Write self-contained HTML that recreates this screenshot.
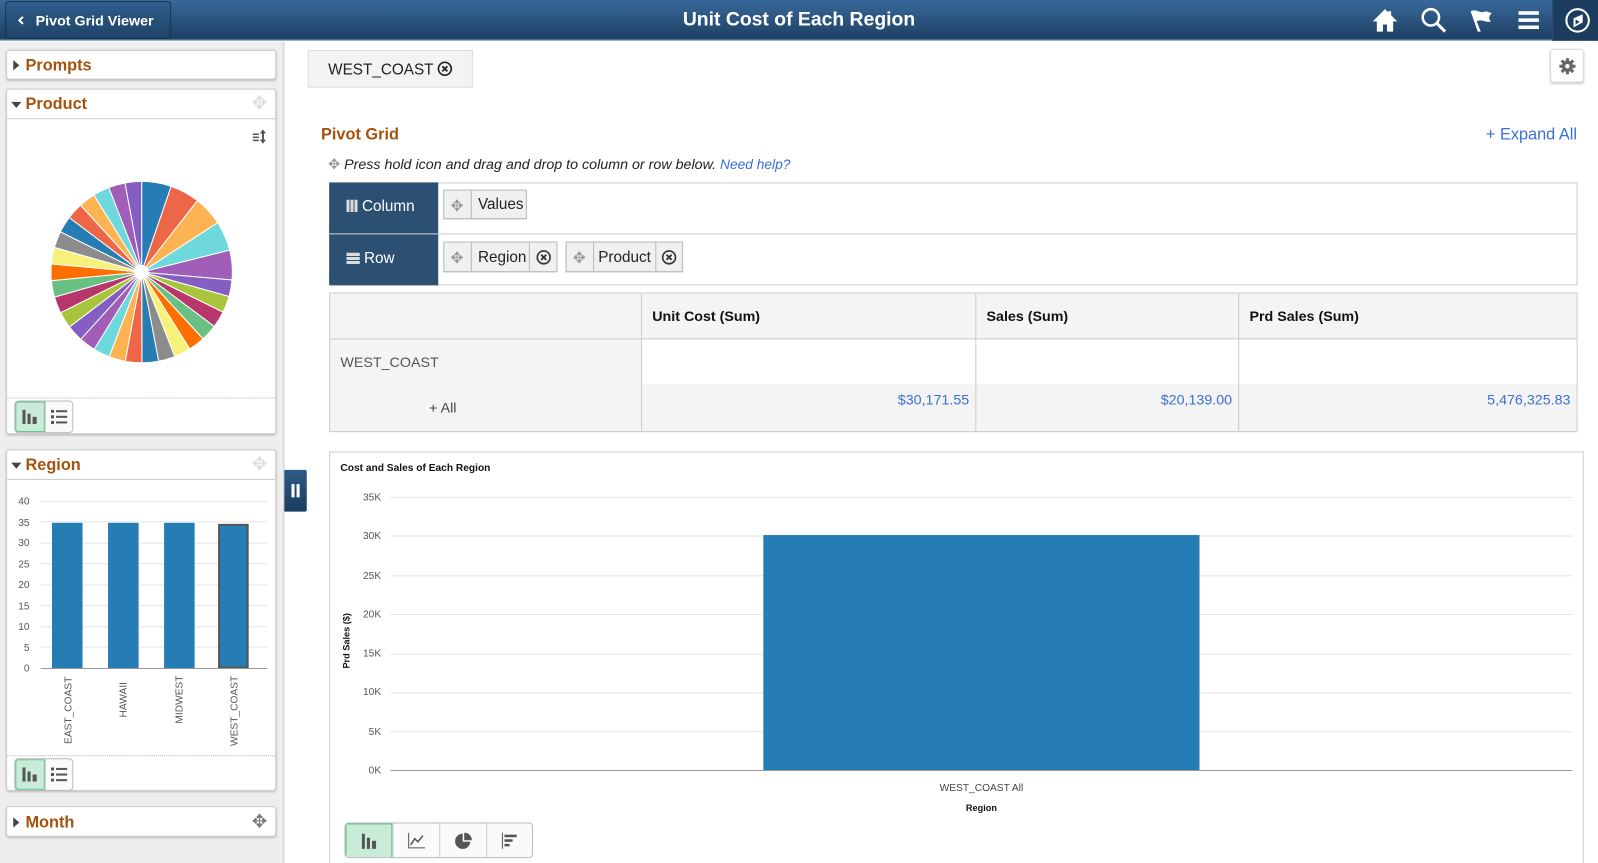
<!DOCTYPE html>
<html style="overflow:hidden;height:863px"><head><meta charset="utf-8">
<style>
*{box-sizing:border-box;margin:0;padding:0}
body{width:1598px;height:863px;overflow:hidden;font-family:"Liberation Sans",Arial,sans-serif;background:#fff;position:relative;color:#333}
#w{position:absolute;left:0;top:0;width:1568px;height:847px;overflow:hidden;transform:scale(1.01913);transform-origin:0 0}
.a{position:absolute}
.hdr{left:0;top:0;width:1568px;height:40px;background:linear-gradient(#38699a,#1d3f62);border-bottom:1px solid #6d9cc8}
.title{left:0;width:1568px;top:9px;text-align:center;color:#fff;font-size:19px;font-weight:bold}
.back{left:5px;top:1px;width:163px;height:37px;border:1px solid #163552;border-radius:3px;background:linear-gradient(#2f5e8a,#1f4468);color:#fff;font-weight:bold;font-size:14px;padding:10px 0 0 29px}
.left{left:0;top:41px;width:279px;height:806px;background:#eee;border-right:1px solid #ccc}
.pan{background:#fff;border:1px solid #cfcfcf;border-radius:3px;box-shadow:0 1px 2px #bbb}
.ph{font-size:16px;font-weight:bold;color:#a5520d}
.tri{display:inline-block;width:0;height:0}
.tr{border-left:6px solid #444;border-top:5px solid transparent;border-bottom:5px solid transparent}
.td{border-top:6px solid #444;border-left:5px solid transparent;border-right:5px solid transparent}
.tog{width:58px;height:32px;border:1px solid #bbb;border-radius:4px;background:#fafafa;overflow:hidden}
.tog div{position:absolute;top:0;height:30px;width:29px}
.pill{border:1px solid #bbb;background:#eef0f2;height:30px;font-size:15px;color:#222;box-shadow:0 1px 1px #ccc}
.pill span{position:absolute;top:6px}
</style></head><body><div id="w">
<div class="a hdr"></div>
<div class="a back"><svg class="a" style="left:8px;top:11px" width="14" height="14"><circle cx="7" cy="7" r="7" fill="#2a5078"/><path d="M8.5 3.5 5 7l3.5 3.5" stroke="#fff" stroke-width="2" fill="none"/></svg>Pivot Grid Viewer</div>
<div class="a title">Unit Cost of Each Region</div>
<svg class="a" style="left:1346px;top:8px" width="26" height="24"><path d="M13 1 1 13h4v10h6v-7h4v7h6V13h4L19 7V3h-3v1z" fill="#fff"/></svg>
<svg class="a" style="left:1394px;top:7px" width="26" height="26"><circle cx="10" cy="10" r="8" stroke="#fff" stroke-width="2.5" fill="none"/><path d="M16 16l8 8" stroke="#fff" stroke-width="3"/></svg>
<svg class="a" style="left:1441px;top:8px" width="26" height="26"><path d="M2 3c6-3 9 3 15 0l6 2c-4 3-3 6-1 8-5 2-9-3-14 0l4 10H9L2 3z" fill="#fff"/></svg>
<svg class="a" style="left:1490px;top:10px" width="22" height="20"><rect y="1" width="20" height="3.5" fill="#fff"/><rect y="8" width="20" height="3.5" fill="#fff"/><rect y="15" width="20" height="3.5" fill="#fff"/></svg>
<div class="a" style="left:1523px;top:0;width:45px;height:40px;background:#1d3d5e;border-left:1px solid #2a4f72"></div>
<svg class="a" style="left:1535px;top:7px" width="26" height="26"><circle cx="13" cy="13" r="11" stroke="#fff" stroke-width="2" fill="none"/><path d="M18 7 9 11v9l9-5z" fill="#fff"/><path d="M11 12v5l4-2.5z" fill="#1d3d5e"/></svg>

<div class="a left"></div>
<div class="a pan" style="left:6px;top:49px;width:265px;height:29px"><span class="a tri tr" style="left:6px;top:9px"></span><span class="a ph" style="left:18px;top:6px">Prompts</span></div>
<div class="a pan" style="left:6px;top:87px;width:265px;height:339px">
<div class="a" style="left:0;top:0;width:263px;height:29px;border-bottom:1px solid #ccc"></div>
<span class="a tri td" style="left:4px;top:12px"></span><span class="a ph" style="left:18px;top:6px">Product</span>
<span class="a" style="left:240px;top:3px;color:#ddd;font-size:18px">✥</span>
<svg class="a" style="left:241px;top:38px" width="16" height="16"><rect x="0" y="5" width="6" height="1.5" fill="#555"/><rect x="0" y="8" width="6" height="1.5" fill="#555"/><rect x="0" y="11" width="6" height="1.5" fill="#555"/><path d="M10 1l3 4h-2v6h2l-3 4-3-4h2V5H7z" fill="#555"/></svg>
<svg id="pie" class="a" style="left:0;top:29px" width="263" height="270"></svg>
<div class="a" style="left:0;top:302px;width:263px;border-top:1px dotted #bbb"></div>
<div class="a tog" style="left:7px;top:305px"><div style="left:0;background:#c9ecd9;border:1px solid #5fbf8a;border-radius:3px 0 0 3px"></div><div style="left:29px;border-left:1px solid #ccc"></div>
<svg class="a" style="left:7px;top:8px" width="16" height="14"><rect x="0" y="0" width="3" height="14" fill="#555"/><rect x="5" y="4" width="3" height="10" fill="#555"/><rect x="10" y="7" width="4" height="7" fill="#555"/></svg>
<svg class="a" style="left:35px;top:8px" width="16" height="14"><rect y="0" width="3" height="3" fill="#555"/><rect x="5" y="0.5" width="11" height="2" fill="#555"/><rect y="5.5" width="3" height="3" fill="#555"/><rect x="5" y="6" width="11" height="2" fill="#555"/><rect y="11" width="3" height="3" fill="#555"/><rect x="5" y="11.5" width="11" height="2" fill="#555"/></svg></div>
</div>

<div class="a pan" style="left:6px;top:441px;width:265px;height:335px">
<div class="a" style="left:0;top:0;width:263px;height:29px;border-bottom:1px solid #ccc"></div>
<span class="a tri td" style="left:4px;top:12px"></span><span class="a ph" style="left:18px;top:6px">Region</span>
<span class="a" style="left:240px;top:3px;color:#ddd;font-size:18px">✥</span>
<svg class="a" style="left:0;top:30px" width="263" height="270" font-family="Liberation Sans" font-size="10" fill="#555">
<g fill="#555" text-anchor="end">
<text x="22" y="23">40</text><text x="22" y="44">35</text><text x="22" y="64">30</text><text x="22" y="85">25</text><text x="22" y="105">20</text><text x="22" y="126">15</text><text x="22" y="146">10</text><text x="22" y="167">5</text><text x="22" y="187">0</text></g>
<g stroke="#e6e6e6"><line x1="33" x2="255" y1="20" y2="20"/><line x1="33" x2="255" y1="40" y2="40"/><line x1="33" x2="255" y1="61" y2="61"/><line x1="33" x2="255" y1="81" y2="81"/><line x1="33" x2="255" y1="102" y2="102"/><line x1="33" x2="255" y1="122" y2="122"/><line x1="33" x2="255" y1="143" y2="143"/><line x1="33" x2="255" y1="163" y2="163"/></g>
<rect x="44" y="41" width="30" height="143" fill="#267db3"/><rect x="99" y="41" width="30" height="143" fill="#267db3"/><rect x="154" y="41" width="30" height="143" fill="#267db3"/><rect x="208" y="43" width="28" height="140" fill="#267db3" stroke="#555" stroke-width="2"/>
<line x1="33" x2="255" y1="184" y2="184" stroke="#999"/>
<text transform="translate(63,258) rotate(-90)">EAST_COAST</text><text transform="translate(117,232) rotate(-90)">HAWAII</text><text transform="translate(172,238) rotate(-90)">MIDWEST</text><text transform="translate(226,260) rotate(-90)">WEST_COAST</text>
</svg>
<div class="a" style="left:0;top:299px;width:263px;border-top:1px dotted #bbb"></div>
<div class="a tog" style="left:7px;top:302px"><div style="left:0;background:#c9ecd9;border:1px solid #5fbf8a;border-radius:3px 0 0 3px"></div><div style="left:29px;border-left:1px solid #ccc"></div>
<svg class="a" style="left:7px;top:8px" width="16" height="14"><rect x="0" y="0" width="3" height="14" fill="#555"/><rect x="5" y="4" width="3" height="10" fill="#555"/><rect x="10" y="7" width="4" height="7" fill="#555"/></svg>
<svg class="a" style="left:35px;top:8px" width="16" height="14"><rect y="0" width="3" height="3" fill="#555"/><rect x="5" y="0.5" width="11" height="2" fill="#555"/><rect y="5.5" width="3" height="3" fill="#555"/><rect x="5" y="6" width="11" height="2" fill="#555"/><rect y="11" width="3" height="3" fill="#555"/><rect x="5" y="11.5" width="11" height="2" fill="#555"/></svg></div>
</div>
<div class="a pan" style="left:6px;top:791px;width:265px;height:30px"><span class="a tri tr" style="left:6px;top:10px"></span><span class="a ph" style="left:18px;top:7px">Month</span><span class="a" style="left:240px;top:4px;color:#777;font-size:18px">✥</span></div>

<div class="a" style="left:279px;top:461px;width:22px;height:41px;background:linear-gradient(#2d5a85,#1b3d5f);border-radius:0 2px 2px 0"><div class="a" style="left:7px;top:14px;width:3px;height:13px;background:#fff"></div><div class="a" style="left:12px;top:14px;width:3px;height:13px;background:#fff"></div></div>

<div class="a" style="left:302px;top:49px;width:162px;height:37px;background:#f3f3f3;border:1px solid #ddd;font-size:15px;color:#222;padding:10px 0 0 19px">WEST_COAST <svg style="vertical-align:-2px" width="15" height="15"><circle cx="7.5" cy="7.5" r="6.3" stroke="#222" stroke-width="1.6" fill="none"/><path d="M5 5l5 5M10 5l-5 5" stroke="#222" stroke-width="1.8"/></svg></div>
<div class="a" style="left:1521px;top:48px;width:33px;height:33px;border:1px solid #ddd;border-radius:3px;box-shadow:0 1px 2px #ccc;background:#fff">
<svg class="a" style="left:8px;top:8px" width="16" height="16"><g fill="#666"><circle cx="8" cy="8" r="5.5"/><rect x="6.5" y="0" width="3" height="16"/><rect x="0" y="6.5" width="16" height="3"/><rect x="6.5" y="0" width="3" height="16" transform="rotate(45 8 8)"/><rect x="6.5" y="0" width="3" height="16" transform="rotate(-45 8 8)"/></g><circle cx="8" cy="8" r="2.2" fill="#fff"/></svg></div>

<div class="a" style="left:315px;top:124px;font-size:16px;font-weight:bold;color:#a5520d">Pivot Grid</div>
<div class="a" style="left:1458px;top:124px;font-size:16px;color:#3a6fd6">+ Expand All</div>
<div class="a" style="left:322px;top:153px;font-size:14px;font-style:italic;color:#222"><span style="color:#999;font-style:normal">✥</span> Press hold icon and drag and drop to column or row below. <span style="color:#3a6fd6;font-size:13.5px">Need help?</span></div>

<div class="a" style="left:323px;top:179px;width:1225px;height:101px;border:1px solid #ccc"></div>
<div class="a" style="left:323px;top:229px;width:1225px;height:1px;background:#ccc"></div>
<div class="a" style="left:323px;top:179px;width:107px;height:50px;background:#2b5072;color:#fff;font-size:15px;padding:15px 0 0 17px"><span style="display:inline-block;width:11px;height:12px;background:repeating-linear-gradient(90deg,#ddd 0 3px,transparent 3px 4px);vertical-align:-1px"></span> Column</div>
<div class="a" style="left:323px;top:230px;width:107px;height:50px;background:#2b5072;color:#fff;font-size:15px;padding:15px 0 0 17px"><span style="display:inline-block;width:13px;height:11px;background:repeating-linear-gradient(180deg,#ddd 0 3px,transparent 3px 4px);vertical-align:-1px"></span> Row</div>
<div class="a pill" style="left:435px;top:186px;width:82px;height:29px"><span style="left:6px;color:#999">✥</span><div class="a" style="left:26px;top:0;height:27px;border-left:1px solid #bbb"></div><span style="left:33px;top:5px">Values</span></div>
<div class="a pill" style="left:435px;top:237px;width:112px"><span style="left:6px;color:#999">✥</span><div class="a" style="left:26px;top:0;height:28px;border-left:1px solid #bbb"></div><span style="left:33px">Region</span><div class="a" style="left:83px;top:0;height:28px;border-left:1px solid #bbb"></div><svg class="a" style="left:90px;top:7px" width="15" height="15"><circle cx="7.5" cy="7.5" r="6.3" stroke="#333" stroke-width="1.6" fill="none"/><path d="M5 5l5 5M10 5l-5 5" stroke="#333" stroke-width="1.8"/></svg></div>
<div class="a pill" style="left:555px;top:237px;width:115px"><span style="left:6px;color:#999">✥</span><div class="a" style="left:26px;top:0;height:28px;border-left:1px solid #bbb"></div><span style="left:31px">Product</span><div class="a" style="left:87px;top:0;height:28px;border-left:1px solid #bbb"></div><svg class="a" style="left:93px;top:7px" width="15" height="15"><circle cx="7.5" cy="7.5" r="6.3" stroke="#333" stroke-width="1.6" fill="none"/><path d="M5 5l5 5M10 5l-5 5" stroke="#333" stroke-width="1.8"/></svg></div>

<div class="a" style="left:323px;top:287px;width:1225px;height:137px;border:1px solid #ccc;background:#f4f4f4"></div>
<div class="a" style="left:630px;top:333px;width:917px;height:44px;background:#fff"></div>
<div class="a" style="left:324px;top:332px;width:1223px;height:1px;background:#ccc"></div>
<div class="a" style="left:629px;top:288px;width:1px;height:135px;background:#ccc"></div>
<div class="a" style="left:957px;top:288px;width:1px;height:135px;background:#ccc"></div>
<div class="a" style="left:1215px;top:288px;width:1px;height:135px;background:#ccc"></div>
<div class="a" style="left:640px;top:302px;font-size:14px;font-weight:bold;color:#111">Unit Cost (Sum)</div>
<div class="a" style="left:968px;top:302px;font-size:14px;font-weight:bold;color:#111">Sales (Sum)</div>
<div class="a" style="left:1226px;top:302px;font-size:14px;font-weight:bold;color:#111">Prd Sales (Sum)</div>
<div class="a" style="left:334px;top:347px;font-size:14px;color:#555">WEST_COAST</div>
<div class="a" style="left:421px;top:392px;font-size:14px;color:#444">+ All</div>
<div class="a" style="left:630px;width:321px;top:384px;font-size:14px;color:#3a6fd6;text-align:right">$30,171.55</div>
<div class="a" style="left:958px;width:251px;top:384px;font-size:14px;color:#3a6fd6;text-align:right">$20,139.00</div>
<div class="a" style="left:1216px;width:325px;top:384px;font-size:14px;color:#3a6fd6;text-align:right">5,476,325.83</div>

<div class="a" style="left:323px;top:443px;width:1231px;height:404px;border:1px solid #ccc;border-bottom:none"></div>
<svg class="a" style="left:323px;top:443px" width="1231" height="404" font-family="Liberation Sans">
<text x="11" y="19" font-size="10" font-weight="bold" fill="#111">Cost and Sales of Each Region</text>
<g stroke="#e6e6e6"><line x1="60" x2="1220" y1="45" y2="45"/><line x1="60" x2="1220" y1="83" y2="83"/><line x1="60" x2="1220" y1="122" y2="122"/><line x1="60" x2="1220" y1="160" y2="160"/><line x1="60" x2="1220" y1="199" y2="199"/><line x1="60" x2="1220" y1="237" y2="237"/><line x1="60" x2="1220" y1="275" y2="275"/></g>
<g font-size="10" fill="#555" text-anchor="end"><text x="51" y="48">35K</text><text x="51" y="86">30K</text><text x="51" y="125">25K</text><text x="51" y="163">20K</text><text x="51" y="201">15K</text><text x="51" y="239">10K</text><text x="51" y="278">5K</text><text x="51" y="316">0K</text></g>
<rect x="426" y="82" width="428" height="231" fill="#267db3"/>
<line x1="60" x2="1220" y1="313" y2="313" stroke="#999"/>
<text x="640" y="333" font-size="10" fill="#444" text-anchor="middle">WEST_COAST All</text>
<text x="640" y="353" font-size="9" font-weight="bold" fill="#111" text-anchor="middle">Region</text>
<text transform="translate(20,213) rotate(-90)" font-size="9" font-weight="bold" fill="#111">Prd Sales ($)</text>
</svg>
<div class="a" style="left:338px;top:807px;width:185px;height:35px;border:1px solid #bbb;border-radius:4px;background:#fafafa;overflow:hidden">
<div class="a" style="left:0;top:0;width:46px;height:35px;background:#c9ecd9;border:1px solid #5fbf8a"></div>
<div class="a" style="left:46px;top:0;height:35px;border-left:1px solid #ccc"></div><div class="a" style="left:92px;top:0;height:35px;border-left:1px solid #ccc"></div><div class="a" style="left:138px;top:0;height:35px;border-left:1px solid #ccc"></div>
<svg class="a" style="left:16px;top:10px" width="16" height="15"><rect x="0" y="0" width="3" height="15" fill="#555"/><rect x="5" y="4" width="3" height="11" fill="#555"/><rect x="10" y="7" width="4" height="8" fill="#555"/></svg>
<svg class="a" style="left:61px;top:9px" width="18" height="16"><path d="M1 0v15h16" stroke="#555" fill="none"/><path d="M3 12l4-6 3 3 5-6" stroke="#555" stroke-width="1.5" fill="none"/></svg>
<svg class="a" style="left:107px;top:9px" width="17" height="17"><path d="M8 1A7.5 7.5 0 1 0 15.5 9H8z" fill="#555"/><path d="M9.5 0v7.5H17A7.5 7.5 0 0 0 9.5 0z" fill="#555"/></svg>
<svg class="a" style="left:153px;top:9px" width="17" height="16"><path d="M1 0v16" stroke="#555"/><rect x="3" y="2" width="12" height="2.5" fill="#555"/><rect x="3" y="6.5" width="8" height="2.5" fill="#555"/><rect x="3" y="11" width="5" height="2.5" fill="#555"/></svg>
</div>
</div>
<script>
(function(){
var cx=132,cy=150,r=89,svg=document.getElementById('pie');
var cols=['#267db3','#ed6647','#fdb351','#6dd9dc','#a15eb8','#845ec2','#a8c43a','#b7366b','#68c182','#ff6f00','#f6f17a','#8c8c8c'];
var s='',a=0;
for(var i=0;i<30;i++){
 var d=i<5?19:10.6;
 var a1=a*Math.PI/180,a2=(a+d)*Math.PI/180;
 var x1=cx+r*Math.sin(a1),y1=cy-r*Math.cos(a1),x2=cx+r*Math.sin(a2),y2=cy-r*Math.cos(a2);
 s+='<path d="M'+cx+' '+cy+'L'+x1.toFixed(2)+' '+y1.toFixed(2)+'A'+r+' '+r+' 0 0 1 '+x2.toFixed(2)+' '+y2.toFixed(2)+'Z" fill="'+cols[i%12]+'" stroke="#fff" stroke-width="1"/>';
 a+=d;
}
s+='<circle cx="'+cx+'" cy="'+cy+'" r="7" fill="#fff"/>';
svg.innerHTML=s;
})();
</script>
</body></html>
